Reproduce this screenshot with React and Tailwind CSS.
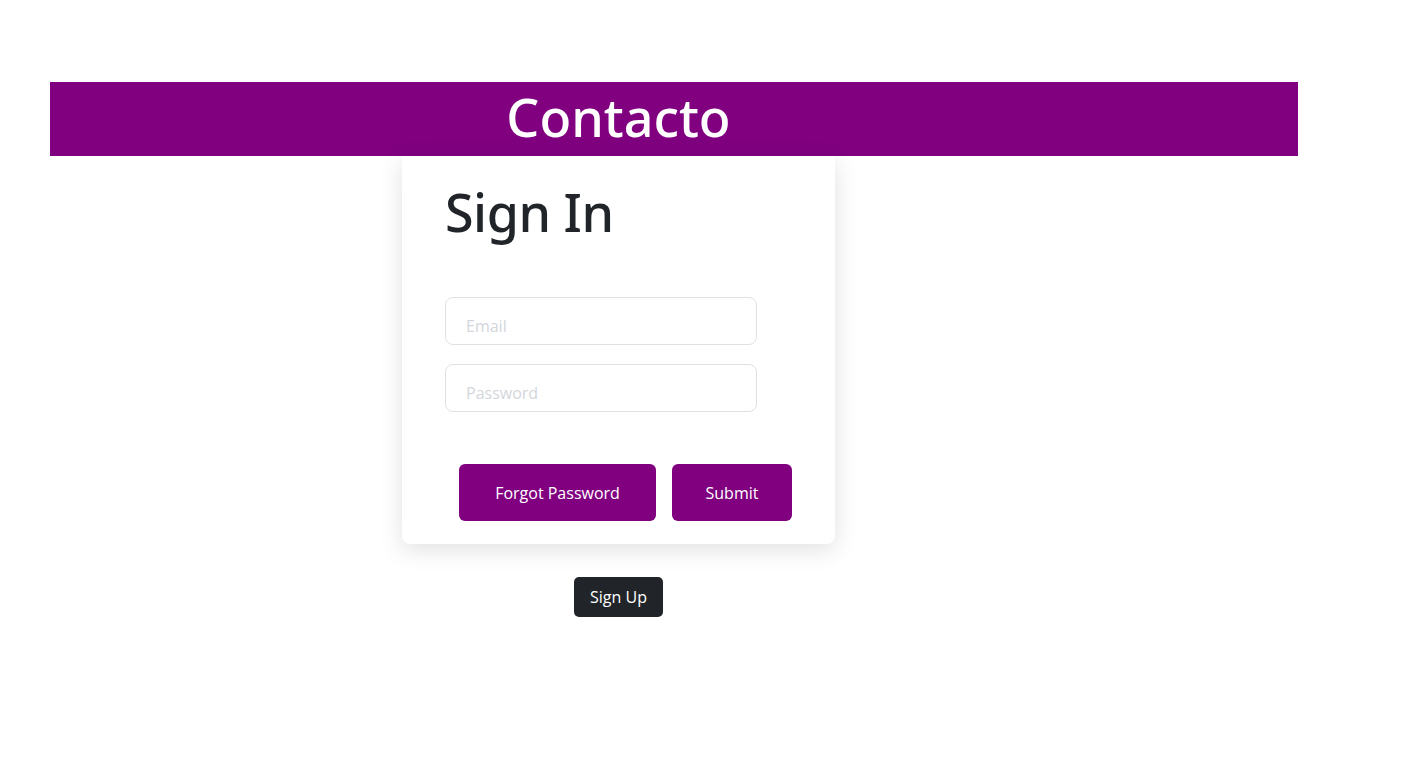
export default function App() {
  return (
    <div className="min-h-[779px] bg-white pt-[82px] font-['Open_Sans','Noto_Sans',sans-serif]">
      <div className="w-[1237px] flex flex-col">
        <div className="ml-[50px] w-[1248px] h-[74px] bg-[#800080] flex items-center justify-center pr-[111px]">
          <h2 className="text-white text-[52px] leading-none font-medium -mt-[4px] font-['Noto_Sans','Open_Sans',sans-serif]">
            Contacto
          </h2>
        </div>
        <div className="self-center w-[433px] bg-white rounded-b-[8px] shadow-[0_6px_24px_rgba(0,0,0,0.12)] px-[43px] pt-[24px] pb-[23px]">
          <h1 className="text-[#212529] text-[52px] leading-[64px] font-medium tracking-[-0.5px] font-['Noto_Sans','Open_Sans',sans-serif]">
            Sign In
          </h1>
          <div className="mt-[53px] flex flex-col gap-[19px]">
            <input
              type="email"
              placeholder="Email"
              className="w-[312px] h-[48px] rounded-[8px] border border-[#dee2e6] px-[20px] pt-[9px] text-[16px] text-[#212529] placeholder:text-[#d3d6db] outline-none font-['Open_Sans',sans-serif]"
            />
            <input
              type="password"
              placeholder="Password"
              className="w-[312px] h-[48px] rounded-[8px] border border-[#dee2e6] px-[20px] pt-[9px] text-[16px] text-[#212529] placeholder:text-[#d3d6db] outline-none font-['Open_Sans',sans-serif]"
            />
          </div>
          <div className="mt-[52px] ml-[14px] flex gap-[16px]">
            <button className="w-[197px] h-[57px] rounded-[6px] bg-[#800080] text-white text-[16px] font-['Open_Sans',sans-serif]">
              Forgot Password
            </button>
            <button className="w-[120px] h-[57px] rounded-[6px] bg-[#800080] text-white text-[16px] font-['Open_Sans',sans-serif]">
              Submit
            </button>
          </div>
        </div>
        <div className="self-center mt-[33px]">
          <button className="w-[89px] h-[40px] rounded-[5px] bg-[#212529] text-white text-[16px] font-['Open_Sans',sans-serif]">
            Sign Up
          </button>
        </div>
      </div>
    </div>
  );
}
